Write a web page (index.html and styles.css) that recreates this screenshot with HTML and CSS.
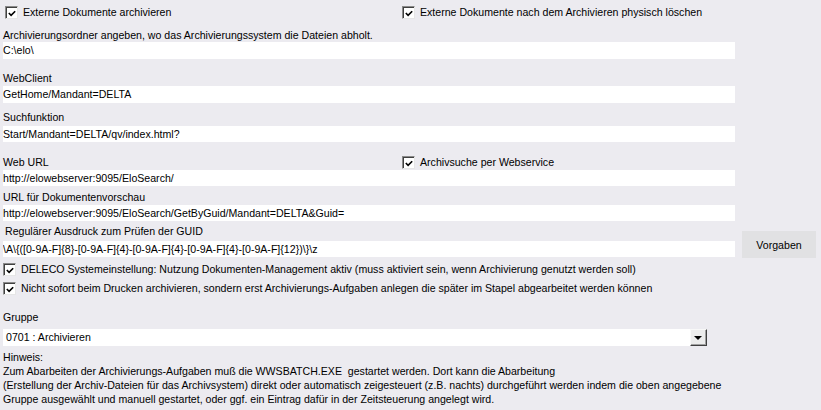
FILE: index.html
```html
<!DOCTYPE html>
<html lang="de">
<head>
    <meta charset="UTF-8">
    <meta name="viewport" content="width=device-width, initial-scale=1.0">
    <title>Archivierung</title>

    <link rel="stylesheet" href="styles.css">

</head>
<body>

    <div class="form">

        <div class="form__row form__row--top">
            <div class="check check--first check--col">
                <span class="check__box"><svg viewBox="0 0 11 11"><path d="M2 5 L4.5 7.5 L9 3" /></svg></span>
                <span>Externe Dokumente archivieren</span>
            </div>
            <div class="check">
                <span class="check__box"><svg viewBox="0 0 11 11"><path d="M2 5 L4.5 7.5 L9 3" /></svg></span>
                <span>Externe Dokumente nach dem Archivieren physisch löschen</span>
            </div>
        </div>

        <div class="field field--1">
            <div class="field__label">Archivierungsordner angeben, wo das Archivierungssystem die Dateien abholt.</div>
            <div class="field__box">C:\elo\</div>
        </div>

        <div class="field field--2">
            <div class="field__label">WebClient</div>
            <div class="field__box">GetHome/Mandant=DELTA</div>
        </div>

        <div class="field field--3">
            <div class="field__label">Suchfunktion</div>
            <div class="field__box">Start/Mandant=DELTA/qv/index.html?</div>
        </div>

        <div class="field field--4">
            <div class="field__head">
                <div class="field__label field__label--col">Web URL</div>
                <div class="check">
                    <span class="check__box"><svg viewBox="0 0 11 11"><path d="M2 5 L4.5 7.5 L9 3" /></svg></span>
                    <span>Archivsuche per Webservice</span>
                </div>
            </div>
            <div class="field__box">http://elowebserver:9095/EloSearch/</div>
        </div>

        <div class="field field--5">
            <div class="field__label">URL für Dokumentenvorschau</div>
            <div class="field__box">http://elowebserver:9095/EloSearch/GetByGuid/Mandant=DELTA&amp;Guid=</div>
        </div>

        <div class="form__row form__row--regex">
            <div class="field field--6">
                <div class="field__label field__label--indent">Regulärer Ausdruck zum Prüfen der GUID</div>
                <div class="field__box">\A\{([0-9A-F]{8}-[0-9A-F]{4}-[0-9A-F]{4}-[0-9A-F]{4}-[0-9A-F]{12})\}\z</div>
            </div>
            <button class="button">Vorgaben</button>
        </div>

        <div class="check check--line check--deleco">
            <span class="check__box"><svg viewBox="0 0 11 11"><path d="M2 5 L4.5 7.5 L9 3" /></svg></span>
            <span>DELECO Systemeinstellung: Nutzung Dokumenten-Management aktiv (muss aktiviert sein, wenn Archivierung genutzt werden soll)</span>
        </div>

        <div class="check check--line check--print">
            <span class="check__box"><svg viewBox="0 0 11 11"><path d="M2 5 L4.5 7.5 L9 3" /></svg></span>
            <span>Nicht sofort beim Drucken archivieren, sondern erst Archivierungs-Aufgaben anlegen die später im Stapel abgearbeitet werden können</span>
        </div>

        <div class="field field--group">
            <div class="field__label">Gruppe</div>
            <div class="combo">
                <div class="combo__text">0701 : Archivieren</div>
                <div class="combo__button"><span class="combo__arrow"></span></div>
            </div>
        </div>

        <div class="hint">
            Hinweis:<br>
            Zum Abarbeiten der Archivierungs-Aufgaben muß die WWSBATCH.EXE &nbsp;gestartet werden. Dort kann die Abarbeitung<br>
            (Erstellung der Archiv-Dateien für das Archivsystem) direkt oder automatisch zeigesteuert (z.B. nachts) durchgeführt werden indem die oben angegebene<br>
            Gruppe ausgewählt und manuell gestartet, oder ggf. ein Eintrag dafür in der Zeitsteuerung angelegt wird.
        </div>

    </div>

</body>
</html>
```

FILE: styles.css
```css
body{
    margin: 0;
    background: #ecebf0;
    font-family: "Liberation Sans", Arial, sans-serif;
    font-size: 10.6px;
    color: #000;
}

.form{
    display: flex;
    flex-direction: column;
    padding: 6px 0 0 3px;
}

.form__row{
    display: flex;
}

.form__row--regex{
    align-items: flex-start;
}

/* checkboxes */
.check{
    display: flex;
    align-items: center;
    gap: 5px;
    height: 13px;
    line-height: 13px;
    white-space: nowrap;
}

.check--first{
    padding-left: 2px;
}

.check--col{
    width: 397px;
}

.check--deleco{
    margin-top: 5px;
}

.check--print{
    margin-top: 6px;
}

.check__box{
    box-sizing: border-box;
    width: 13px;
    height: 13px;
    background: #fff;
    border: 1px solid;
    border-color: #8a8a8a #e6e6e6 #e6e6e6 #8a8a8a;
    box-shadow: inset 1px 1px 0 #404040;
    display: flex;
    align-items: center;
    justify-content: center;
    flex-shrink: 0;
}

.check__box svg{
    width: 11px;
    height: 11px;
    margin: 1px 0 0 1px;
}

.check__box path{
    fill: none;
    stroke: #000;
    stroke-width: 1.8;
}

/* text fields */
.field__head{
    display: flex;
    align-items: center;
}

.field__label{
    height: 13px;
    line-height: 13px;
    white-space: nowrap;
}

.field__label--col{
    width: 399px;
}

.field__label--indent{
    padding-left: 2px;
}

.field__box{
    box-sizing: border-box;
    width: 732px;
    height: 16px;
    line-height: 16px;
    background: #fff;
    white-space: nowrap;
    overflow: hidden;
}

.field--1{ margin-top: 10px; }
.field--1 .field__box{ height: 17px; line-height: 17px; }

.field--2{ margin-top: 13px; }
.field--2 .field__box{ margin-top: 1px; height: 17px; line-height: 17px; }

.field--3{ margin-top: 8px; }
.field--3 .field__box{ margin-top: 2px; }

.field--4{ margin-top: 14px; }
.field--4 .field__box{ margin-top: 1px; }

.field--5{ margin-top: 5px; }
.field--5 .field__box{ margin-top: 1px; }

.field--6{ margin-top: 4px; }
.field--6 .field__box{ margin-top: 3px; }

.field--group{ margin-top: 16px; }

.button{
    width: 74px;
    height: 27px;
    margin: 10px 0 0 7px;
    border: none;
    background: #e1e1e3;
    font-family: inherit;
    font-size: inherit;
    color: #000;
    padding: 0;
}

/* combobox */
.combo{
    display: flex;
    width: 704px;
    height: 17px;
    margin-top: 5px;
    background: #fff;
}

.combo__text{
    flex: 1;
    line-height: 17px;
    padding-left: 3px;
}

.combo__button{
    box-sizing: border-box;
    width: 17px;
    height: 17px;
    background: #ececec;
    border: 1px solid;
    border-color: #f8f8f8 #404040 #404040 #f8f8f8;
    box-shadow: inset -1px -1px 0 #a0a0a0;
    display: flex;
    align-items: center;
    justify-content: center;
}

.combo__arrow{
    width: 0;
    height: 0;
    border-left: 4px solid transparent;
    border-right: 4px solid transparent;
    border-top: 4px solid #000;
    margin: 1px 1px 0 0;
}

.hint{
    margin-top: 4px;
    line-height: 14px;
}
```
